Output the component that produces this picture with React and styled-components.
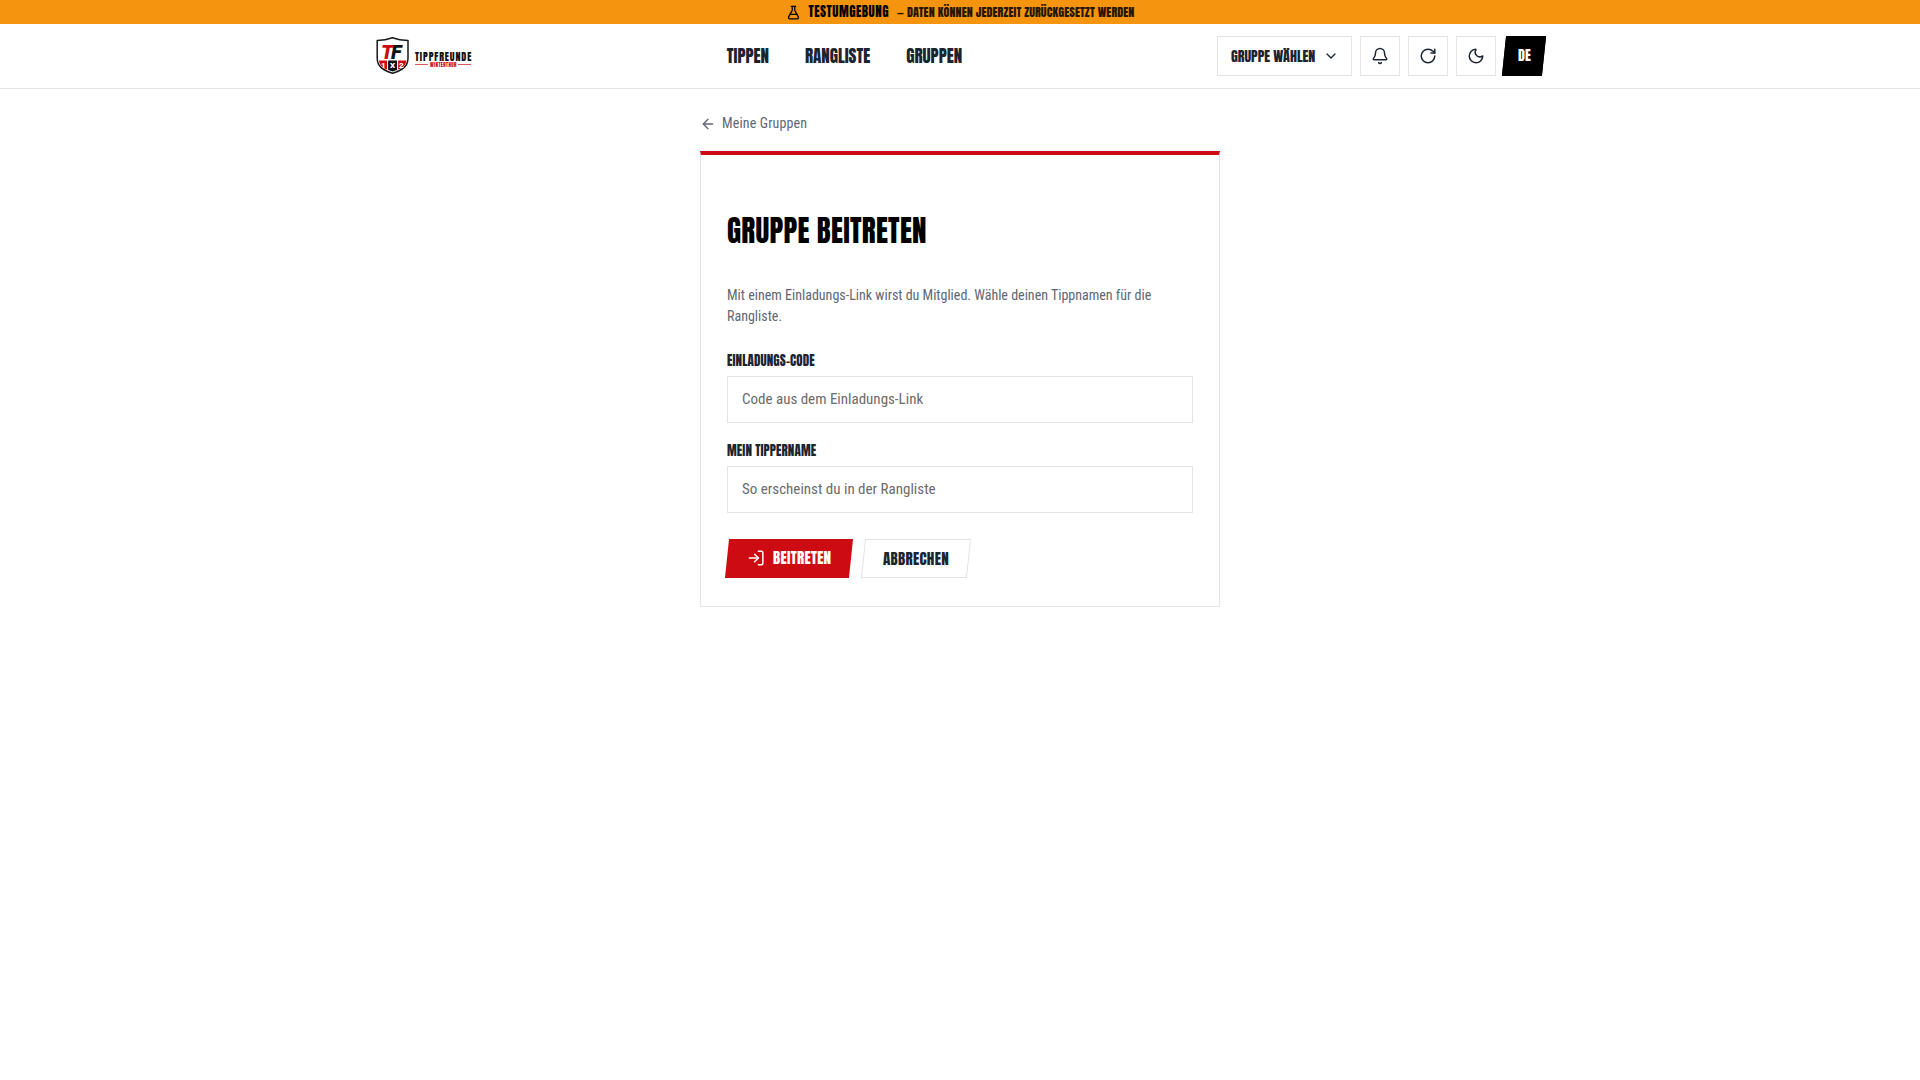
import React, { useState } from "react"
import styled, { createGlobalStyle } from "styled-components"
import {
  ArrowLeft,
  Bell,
  ChevronDown,
  FlaskConical,
  LogIn,
  Moon,
  RotateCw,
} from "lucide-react"

const colors = {
  ink: "#1b2430",
  muted: "#5f6675",
  line: "#e2e2e8",
  red: "#cc0c12",
  orange: "#f5950f",
}

const display = `"Anton", "Roboto Condensed", sans-serif`
const body = `"Roboto Condensed", "Roboto", sans-serif`

const Logo = () => (
  <svg width="96" height="40" viewBox="0 0 96 40" role="img">
    <title>Tippfreunde Winterthur</title>
    <path
      d="M1.200 4.600Q9.500 4.300 16.400 1.800Q23.300 4.300 32 4.600V22C32 30 27 34 16.600 37.300C6.200 34 1.200 30 1.200 22Z"
      fill="#fff"
      stroke="#16181c"
      strokeWidth="1.500"
      strokeLinejoin="round"
    />
    <path d="M3 24.500H11V33.500C7.200 32 3.600 30 3 24.500Z" fill={colors.red} />
    <path d="M12.100 24.500H21V34L16.600 35.500L12.100 34Z" fill="#111" />
    <path d="M22.100 24.500H30.400C29.800 30 26 32 22.100 33.500Z" fill={colors.red} />
    <LogoText x="5" y="23" $size={20} $fill={colors.red}>
      T
    </LogoText>
    <LogoText x="15" y="23" $size={20} $fill="#111">
      F
    </LogoText>
    <LogoText x="5" y="32" $size={8} $fill="#fff">
      1
    </LogoText>
    <LogoText x="14" y="32" $size={8} $fill="#fff">
      X
    </LogoText>
    <LogoText x="23" y="32" $size={8} $fill="#fff">
      2
    </LogoText>
    <Wordmark x="39" y="25">
      TIPPFREUNDE
    </Wordmark>
    <path d="M39 28.500H52M82 28.500H95" stroke={colors.red} strokeWidth="0.700" />
    <Place x="54" y="31">
      WINTERTHUR
    </Place>
  </svg>
)

const App = () => {
  const [code, setCode] = useState("")
  const [name, setName] = useState("")
  return (
    <>
      <GlobalStyle />
      <Banner>
        <FlaskConical size={15} />
        <strong>Testumgebung</strong>
        <span>— Daten können jederzeit zurückgesetzt werden</span>
      </Banner>
      <Header>
        <Bar>
          <HomeLink href="#home">
            <Logo />
          </HomeLink>
          <Nav>
            <a href="#tippen">Tippen</a>
            <a href="#rangliste">Rangliste</a>
            <a href="#gruppen">Gruppen</a>
          </Nav>
          <Tools>
            <GroupPicker>
              <select aria-label="Gruppe">
                <option>GRUPPE WÄHLEN</option>
              </select>
              <ChevronDown size={16} />
            </GroupPicker>
            <IconButton type="button" aria-label="Benachrichtigungen">
              <Bell size={18} />
            </IconButton>
            <IconButton type="button" aria-label="Neu laden">
              <RotateCw size={18} />
            </IconButton>
            <IconButton type="button" aria-label="Dunkles Design">
              <Moon size={18} />
            </IconButton>
            <Language type="button">
              <span>DE</span>
            </Language>
          </Tools>
        </Bar>
      </Header>
      <Main>
        <BackLink href="#gruppen">
          <ArrowLeft size={16} />
          Meine Gruppen
        </BackLink>
        <Card onSubmit={e => e.preventDefault()}>
          <h1>Gruppe beitreten</h1>
          <p>
            Mit einem Einladungs-Link wirst du Mitglied. Wähle deinen Tippnamen
            für die Rangliste.
          </p>
          <Field>
            <label htmlFor="code">Einladungs-Code</label>
            <input
              id="code"
              placeholder="Code aus dem Einladungs-Link"
              value={code}
              onChange={e => setCode(e.target.value)}
            />
          </Field>
          <Field>
            <label htmlFor="name">Mein Tippername</label>
            <input
              id="name"
              placeholder="So erscheinst du in der Rangliste"
              value={name}
              onChange={e => setName(e.target.value)}
            />
          </Field>
          <Actions>
            <Button type="submit" $primary>
              <span>
                <LogIn size={18} />
                Beitreten
              </span>
            </Button>
            <Button type="button">
              <span>Abbrechen</span>
            </Button>
          </Actions>
        </Card>
      </Main>
    </>
  )
}
export default App

const GlobalStyle = createGlobalStyle`
  *, *::before, *::after {
    box-sizing: border-box;
  }
  body {
    margin: 0;
    background: #fff;
    color: ${colors.ink};
    font-family: ${body};
    font-size: 15px;
    line-height: 21px;
  }
  a {
    color: inherit;
    text-decoration: none;
  }
  button, input, select {
    margin: 0;
    font: inherit;
    color: inherit;
  }
  button {
    cursor: pointer;
  }
  svg {
    display: block;
    flex-shrink: 0;
  }
`

const LogoText = styled.text`
  font-family: "Roboto", sans-serif;
  font-size: ${p => p.$size}px;
  font-weight: 900;
  font-style: ${p => (p.$size > 10 ? "italic" : "normal")};
  fill: ${p => p.$fill};
`

const Wordmark = styled.text`
  font-family: ${display};
  font-size: 10px;
  letter-spacing: 0.09em;
  fill: #111;
`

const Place = styled.text`
  font-family: ${display};
  font-size: 5px;
  letter-spacing: 0.08em;
  fill: ${colors.red};
`

const Banner = styled.div`
  display: flex;
  align-items: center;
  justify-content: center;
  gap: 8px;
  min-height: 24px;
  background: ${colors.orange};
  color: #000;
  font-family: ${display};
  font-size: 12px;
  line-height: 18px;
  letter-spacing: 0.01em;
  text-transform: uppercase;
  strong {
    font-size: 13px;
    font-weight: 400;
    letter-spacing: 0.04em;
  }
  span {
    opacity: 0.85;
  }
`

const Header = styled.header`
  background: #fff;
  border-bottom: 1px solid ${colors.line};
`

const Bar = styled.div`
  display: flex;
  align-items: center;
  justify-content: space-between;
  max-width: 1216px;
  margin: 0 auto;
  padding: 12px 24px;
`

const HomeLink = styled.a`
  display: block;
`

const Nav = styled.nav`
  display: flex;
  gap: 36px;
  font-family: ${display};
  font-size: 17px;
  line-height: 24px;
  text-transform: uppercase;
`

const Tools = styled.div`
  display: flex;
  gap: 8px;
`

const GroupPicker = styled.div`
  display: grid;
  grid-template-columns: 1fr 28px;
  align-items: center;
  height: 40px;
  background: #fff;
  border: 1px solid ${colors.line};
  select {
    grid-area: 1 / 1 / 2 / 3;
    height: 100%;
    padding: 0 35px 0 13px;
    appearance: none;
    background: none;
    border: none;
    font-family: ${display};
    font-size: 14px;
  }
  svg {
    grid-area: 1 / 2;
    pointer-events: none;
  }
`

const IconButton = styled.button`
  display: flex;
  align-items: center;
  justify-content: center;
  width: 40px;
  height: 40px;
  padding: 0;
  background: #fff;
  border: 1px solid ${colors.line};
`

const Language = styled(IconButton)`
  padding-bottom: 2px;
  transform: skewX(-6deg);
  background: #000;
  border-color: #000;
  color: #fff;
  font-family: ${display};
  font-size: 14px;
  span {
    transform: skewX(6deg);
  }
`

const Main = styled.main`
  max-width: 520px;
  margin: 0 auto;
  padding: 24px 0;
`

const BackLink = styled.a`
  display: inline-flex;
  align-items: center;
  gap: 6px;
  margin-bottom: 17px;
  color: ${colors.muted};
  font-size: 14px;
  letter-spacing: 0.01em;
  vertical-align: top;
`

const Card = styled.form`
  padding: 59px 26px 28px;
  background: #fff;
  border: 1px solid ${colors.line};
  border-top: 4px solid ${colors.red};
  h1 {
    margin: 0 0 36px;
    color: #000;
    font-family: ${display};
    font-size: 29px;
    font-weight: 400;
    line-height: 35px;
    letter-spacing: 0.01em;
    text-transform: uppercase;
  }
  p {
    margin: 0 0 24px;
    color: ${colors.muted};
    font-size: 14px;
  }
`

const Field = styled.div`
  display: flex;
  flex-direction: column;
  gap: 5px;
  margin-bottom: 18px;
  label {
    font-family: ${display};
    font-size: 13px;
    line-height: 20px;
    letter-spacing: 0.01em;
    text-transform: uppercase;
  }
  input {
    width: 100%;
    height: 47px;
    padding: 11px 14px 13px;
    background: #fff;
    border: 1px solid ${colors.line};
    border-radius: 0;
  }
  input::placeholder {
    color: #6b6b6b;
  }
`

const Actions = styled.div`
  display: flex;
  gap: 12px;
  padding-top: 8px;
`

const Button = styled.button`
  height: 39px;
  padding: ${p => (p.$primary ? "0 20px 2px" : "0 19px")};
  transform: skewX(-6deg);
  background: ${p => (p.$primary ? colors.red : "#fff")};
  border: ${p => (p.$primary ? "none" : `1px solid ${colors.line}`)};
  color: ${p => (p.$primary ? "#fff" : colors.ink)};
  font-family: ${display};
  font-size: 15px;
  letter-spacing: 0.02em;
  text-transform: uppercase;
  span {
    display: flex;
    align-items: center;
    gap: 8px;
    transform: skewX(6deg);
  }
`
